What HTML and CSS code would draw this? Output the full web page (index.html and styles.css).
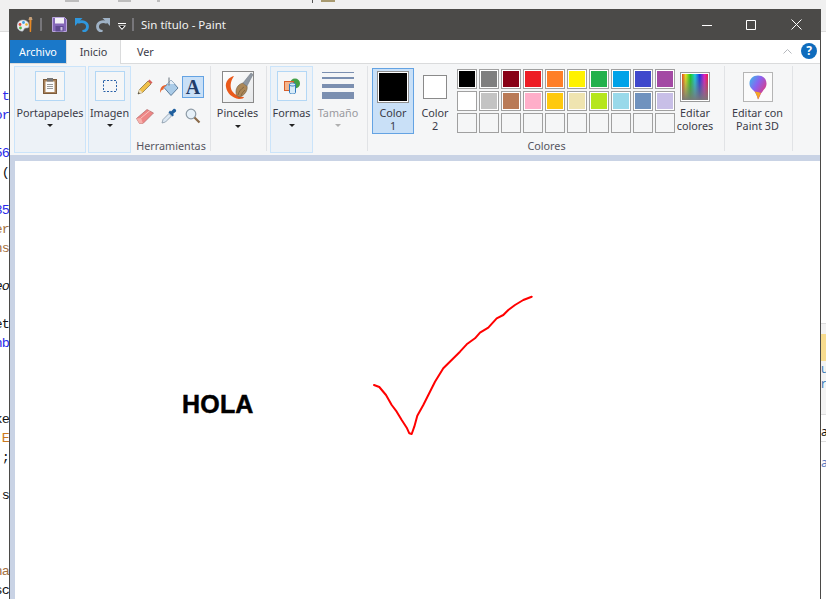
FILE: index.html
```html
<!DOCTYPE html>
<html lang="es">
<head>
    <meta charset="UTF-8">
    <title>Sin título - Paint</title>
    <link rel="stylesheet" href="styles.css">
</head>
<body>

    <!-- What shows around the window: browser bar and the editor behind it -->
    <div class="desktop">
        <div class="top-strip">
            <span class="tick tick1"></span>
            <span class="tick tick2"></span>
            <span class="tick tick3"></span>
            <span class="tick tick4"></span>
            <span class="tick tick5"></span>
        </div>
        <div class="behind">
            <div class="code-col">
                <div class="ln blue">t</div>
                <div class="ln blue">or</div>
                <div class="ln"></div>
                <div class="ln blue">56</div>
                <div class="ln">t (</div>
                <div class="ln"></div>
                <div class="ln blue">35</div>
                <div class="ln brown">er</div>
                <div class="ln brown">ns</div>
                <div class="ln"></div>
                <div class="ln ital">eo</div>
                <div class="ln"></div>
                <div class="ln">et</div>
                <div class="ln blue">nb</div>
                <div class="ln"></div>
                <div class="ln"></div>
                <div class="ln"></div>
                <div class="ln">ke</div>
                <div class="ln orange">E</div>
                <div class="ln"><span class="blue">'</span> ;</div>
                <div class="ln"></div>
                <div class="ln">.s</div>
                <div class="ln"></div>
                <div class="ln"></div>
                <div class="ln"></div>
                <div class="ln brown">na</div>
                <div class="ln">sc</div>
            </div>
            <div class="side-col">
                <div class="side-panel">
                    <div class="side-note"></div>
                    <div class="side-txt blue-soft">u</div>
                    <div class="side-txt blue-soft">r</div>
                </div>
                <div class="side-row">a</div>
                <div class="side-link">ac</div>
            </div>
        </div>
    </div>

    <!-- Paint window -->
    <div class="window">
        <div class="titlebar">
            <svg class="qa qa-app" viewBox="0 0 16 16" width="16" height="16">
                <path d="M0 9c0-4 3-6 6-6s6 2 6 5-1 3-3 3-2 2-3 3c-3 1-6-2-6-5z" fill="#e9edf2" stroke="#9aa3ad" stroke-width=".6"/>
                <circle cx="3" cy="7.500" r="1.400" fill="#e2483d"/>
                <circle cx="6.500" cy="5.500" r="1.400" fill="#3f9ee0"/>
                <circle cx="3.500" cy="11" r="1.400" fill="#54b848"/>
                <circle cx="9.500" cy="7.500" r="1.300" fill="#f0b429"/>
                <path d="M12.500 3h2l-.4 12-1.400 0z" fill="#e98a25"/>
                <path d="M11.500 3h4l-.8-3h-2.400z" fill="#c9a27a"/>
            </svg>
            <span class="qa-sep"></span>
            <svg class="qa qa-save" viewBox="0 0 15 15" width="15" height="15">
                <path d="M.5.500h12l2 2v12H.5z" fill="#8467b8" stroke="#b9a6dc"/>
                <rect x="3" y="1" width="9" height="5.500" fill="#f3f1f8"/>
                <rect x="3.500" y="9" width="8" height="5.500" fill="#5f4a91"/>
                <rect x="8.500" y="10" width="2" height="3.500" fill="#cbbfe3"/>
            </svg>
            <svg class="qa qa-undo" viewBox="0 0 14 14" width="14" height="14">
                <path d="M0 0h7.500L0 8z" fill="#2f97dd"/>
                <path d="M3 4.500C8 2.500 12.500 4.500 12.500 8.500 12.500 11 10.500 13 7.500 13.500" fill="none" stroke="#2f97dd" stroke-width="2.800"/>
            </svg>
            <svg class="qa qa-redo" viewBox="0 0 14 14" width="14" height="14">
                <path d="M14 0H6.500L14 8z" fill="#9fb2c6"/>
                <path d="M11 4.500C6 2.500 1.500 4.500 1.500 8.500 1.500 11 3.500 13 6.500 13.500" fill="none" stroke="#9fb2c6" stroke-width="2.800"/>
            </svg>
            <svg class="qa qa-more" viewBox="0 0 8 7" width="8" height="7">
                <rect x="0" y="0" width="8" height="1" fill="#fff"/>
                <path d="M0 2.500h8L4 7z" fill="#fff"/>
                <path d="M1.800 3h4.400L4 5.400z" fill="#111"/>
            </svg>
            <span class="qa-sep qa-sep2"></span>
            <span class="win-title">Sin título - Paint</span>
            <div class="win-btns">
                <svg class="wbtn wbtn-min" viewBox="0 0 10 10" width="10" height="10"><path d="M0 5.500h10" stroke="#fff" fill="none"/></svg>
                <svg class="wbtn wbtn-max" viewBox="0 0 10 10" width="10" height="10"><path d="M.5.500h9v9h-9z" stroke="#fff" fill="none"/></svg>
                <svg class="wbtn wbtn-close" viewBox="0 0 11 11" width="11" height="11"><path d="M.5.500l10 10M10.500.500l-10 10" stroke="#fff" fill="none"/></svg>
            </div>
        </div>

        <div class="tabs">
            <div class="tab tab-file">Archivo</div>
            <div class="tab tab-on">Inicio</div>
            <div class="tab tab-ver">Ver</div>
            <svg class="collapse" viewBox="0 0 9 5" width="9" height="5"><path d="M.5 4.500l4-4 4 4" fill="none" stroke="#b5b8bd"/></svg>
            <div class="help">?</div>
        </div>

        <div class="ribbon">
            <div class="group big hot g-clip">
                <div class="icon-box">
                    <svg viewBox="0 0 14 16" width="14" height="16">
                        <rect x=".5" y="1.500" width="13" height="14" fill="#a9825a" stroke="#7d5c3b"/>
                        <rect x="2.500" y="3.500" width="9" height="10.500" fill="#fbfbfb"/>
                        <rect x="4" y="0" width="6" height="3.500" fill="#777"/>
                        <path d="M4 6.500h6M4 8.500h6M4 10.500h6" stroke="#9a9a9a"/>
                    </svg>
                </div>
                <div class="lbl">Portapapeles</div>
                <div class="arrow"></div>
            </div>

            <div class="group big hot g-img">
                <div class="icon-box">
                    <svg viewBox="0 0 14 12" width="14" height="12"><rect x=".5" y=".5" width="13" height="11" fill="none" stroke="#2b62a8" stroke-dasharray="2 1.500"/></svg>
                </div>
                <div class="lbl">Imagen</div>
                <div class="arrow"></div>
            </div>

            <div class="group g-tools sep">
                <div class="tools">
                    <div class="tool">
                        <svg viewBox="0 0 16 16" width="16" height="16">
                            <path d="M1 15l1.500-4.500L11 2l3 3-8.500 8.500z" fill="#f0c04a" stroke="#7d6a3a" stroke-width=".7"/>
                            <path d="M11 2l1.500-1.500 3 3L14 5z" fill="#d9605a"/>
                            <path d="M1 15l1.500-4.500 3 3z" fill="#ecdcbc"/>
                            <path d="M1 15l.6-1.900 1.300 1.300z" fill="#333"/>
                        </svg>
                    </div>
                    <div class="tool">
                        <svg viewBox="0 0 20 20" width="20" height="20">
                            <path d="M12 3l7 8-7 7.500-7-8z" fill="#a9cbe8" stroke="#5f7f9d"/>
                            <path d="M12 3l3.500 4-7.500 0z" fill="#e4eef7"/>
                            <path d="M10 .5v8" stroke="#67727c" fill="none"/>
                            <path d="M8 8C3 8 1 10.500 1 16c1-2.500 2-3.500 3.500-3.500 0-2 1-3 3.500-4.500z" fill="#e8622c"/>
                        </svg>
                    </div>
                    <div class="tool tool-on"><span class="tool-a">A</span></div>
                    <div class="tool">
                        <svg viewBox="0 0 18 15" width="18" height="15">
                            <path d="M.5 9.500L11 .5l6.500 3.500L7 14.500H3.500z" fill="#ee8686" stroke="#b26a6a" stroke-width=".7"/>
                            <path d="M.5 9.500l3 5H7l-2-5.500z" fill="#f6b1ac"/>
                            <path d="M5 9L14 1.500" stroke="#f7c2be" fill="none"/>
                        </svg>
                    </div>
                    <div class="tool">
                        <svg viewBox="0 0 16 16" width="16" height="16">
                            <path d="M1 15l1-3.500 6-6 2.500 2.500-6 6z" fill="#dce8f3" stroke="#7a8c9e" stroke-width=".7"/>
                            <path d="M7.500 4.500l4 4 1.500-1.500-1-1L15 3.500c.8-1.500-1-3.300-2.500-2.500L10 3.500 9 2.500z" fill="#1f5f9e"/>
                        </svg>
                    </div>
                    <div class="tool">
                        <svg viewBox="0 0 16 16" width="16" height="16">
                            <circle cx="6" cy="6" r="4.800" fill="#e6f0f8" stroke="#8c9aa5" stroke-width="1.200"/>
                            <path d="M9.500 9.500l5 5" stroke="#8a6a4a" stroke-width="2.200"/>
                        </svg>
                    </div>
                </div>
                <div class="group-name">Herramientas</div>
            </div>

            <div class="group big g-brush sep">
                <div class="brush-box">
                    <svg viewBox="0 0 30 30" width="30" height="30">
                        <path d="M11 4C6 5 2 10 3 15c1 6 6 11 13 12 3 0 5-1 5-2-5 0-9-2-12-6-2-4-2-9 2-15z" fill="#ea5a1c"/>
                        <path d="M13 20c0-5 3-8 7-9l4 3c1 4-2 9-7 11-2 .5-4-2-4-5z" fill="#ab8758" stroke="#6f5a40" stroke-width=".6"/>
                        <path d="M15 23c1-4 3-6 6-8M18 24c1-3 2-4 4-6" stroke="#745a38" fill="none" stroke-width=".7"/>
                        <path d="M20 11L28 1l2 1.500-6 11.500z" fill="#8f98a3" stroke="#6a727c" stroke-width=".5"/>
                    </svg>
                </div>
                <div class="lbl">Pinceles</div>
                <div class="arrow"></div>
            </div>

            <div class="group big hot g-shapes">
                <div class="icon-box">
                    <svg viewBox="0 0 16 16" width="16" height="16">
                        <circle cx="11" cy="5.500" r="5" fill="#43a047"/>
                        <rect x=".5" y="3.500" width="9" height="9" fill="#f5b58d" stroke="#d9602a"/>
                        <path d="M5.500 6.500c0-2 6-2 6 0v8c0 2-6 2-6 0z" fill="#d8ebf8" stroke="#2f78bd"/>
                        <path d="M5.500 6.500c0 2 6 2 6 0" fill="none" stroke="#2f78bd"/>
                    </svg>
                </div>
                <div class="lbl">Formas</div>
                <div class="arrow"></div>
            </div>

            <div class="group big g-size sep">
                <div class="size-lines">
                    <div class="sz sz1"></div>
                    <div class="sz sz2"></div>
                    <div class="sz sz3"></div>
                    <div class="sz sz4"></div>
                </div>
                <div class="lbl lbl-off">Tamaño</div>
                <div class="arrow arrow-off"></div>
            </div>

            <div class="group g-colors sep">
                <div class="colors-row">
                    <div class="color-btn color-on">
                        <div class="swatch-big"><div class="swatch-in"></div></div>
                        <div class="lbl">Color<br>1</div>
                    </div>
                    <div class="color-btn">
                        <div class="swatch-two"></div>
                        <div class="lbl">Color<br>2</div>
                    </div>
                    <div class="palette">
                        <div class="cell c-black"></div>
                        <div class="cell c-gray"></div>
                        <div class="cell c-maroon"></div>
                        <div class="cell c-red"></div>
                        <div class="cell c-orange"></div>
                        <div class="cell c-yellow"></div>
                        <div class="cell c-green"></div>
                        <div class="cell c-sky"></div>
                        <div class="cell c-indigo"></div>
                        <div class="cell c-purple"></div>
                        <div class="cell c-white"></div>
                        <div class="cell c-silver"></div>
                        <div class="cell c-brown"></div>
                        <div class="cell c-pink"></div>
                        <div class="cell c-gold"></div>
                        <div class="cell c-cream"></div>
                        <div class="cell c-lime"></div>
                        <div class="cell c-aqua"></div>
                        <div class="cell c-steel"></div>
                        <div class="cell c-lilac"></div>
                        <div class="cell"></div>
                        <div class="cell"></div>
                        <div class="cell"></div>
                        <div class="cell"></div>
                        <div class="cell"></div>
                        <div class="cell"></div>
                        <div class="cell"></div>
                        <div class="cell"></div>
                        <div class="cell"></div>
                        <div class="cell"></div>
                    </div>
                    <div class="edit-colors">
                        <div class="rainbow"></div>
                        <div class="lbl">Editar<br>colores</div>
                    </div>
                </div>
                <div class="group-name">Colores</div>
            </div>

            <div class="group g-3d sep">
                <div class="box-3d">
                    <svg viewBox="0 0 18 25" width="18" height="25">
                        <defs>
                            <linearGradient id="drop" x1="0" y1="0" x2="1" y2=".8">
                                <stop offset="0" stop-color="#35c0e8"/>
                                <stop offset=".45" stop-color="#8a62f0"/>
                                <stop offset="1" stop-color="#f0306a"/>
                            </linearGradient>
                        </defs>
                        <path d="M9 .5c5 0 8.500 3.500 8.500 8 0 5-4 7-5.500 10-1 2-1.500 4-3 6-.8-3-1.500-5-3.500-8C3 14 .5 12 .5 8.500c0-4.500 3.500-8 8.500-8z" fill="url(#drop)"/>
                        <path d="M9 24.500c-.5-3-2-6-3.500-8 2 .5 4.500.5 6.500 1.500-1.500 2-1.500 4-3 6.500z" fill="#f5a623"/>
                    </svg>
                </div>
                <div class="lbl">Editar con<br>Paint 3D</div>
            </div>
        </div>

        <div class="work">
            <div class="canvas">
                <div class="hola">HOLA</div>
                <svg class="scribble" viewBox="0 0 170 155" width="170" height="155">
                    <path d="M4 95L9.300 97 16 105 21.700 115 26.700 121.700 31.700 130 36.700 137.700 39.300 143.300 41.700 144 44.300 136.700 47.300 125.700 53.300 115 65 91.700 73.300 78.300 90 61.700 96.700 54.300 105 48.300 110 42.700 118.300 37.700 126.700 28.300 133.300 25 138.300 20 145 15 153.300 10 161.700 6.700" fill="none" stroke="#f00" stroke-width="2" stroke-linejoin="round" stroke-linecap="round"/>
                </svg>
            </div>
        </div>
    </div>

</body>
</html>
```

FILE: styles.css
```css
* {
    box-sizing: border-box;
}
body {
    margin: 0;
    width: 826px;
    height: 599px;
    overflow: hidden;
    background-color: #fff;
    font-family: "Noto Sans", sans-serif;
    font-size: 10.8px;
    color: #3b3b47;
}

/* stuff behind the window */
.desktop {
    height: 599px;
    display: flex;
    flex-direction: column;
}
.top-strip {
    height: 32px;
    flex: none;
    display: flex;
    align-items: flex-start;
    background-color: #f0f0f0;
    border-bottom: 1px solid #dcdcdc;
}
.tick {
    height: 2px;
    background-color: #bdbdbd;
}
.tick1 {
    width: 14px;
    margin-left: 65px;
}
.tick2 {
    width: 13px;
    margin-left: 39px;
}
.tick3 {
    width: 3px;
    margin-left: 26px;
}
.tick4 {
    width: 1px;
    height: 3px;
    margin-left: 152px;
    background-color: #555;
}
.tick5 {
    width: 14px;
    margin-left: 8px;
    background-color: #a89a70;
}
.behind {
    flex: 1;
    display: flex;
    justify-content: space-between;
}
.code-col {
    width: 9px;
    padding-top: 55px;
    overflow: hidden;
    font-family: "Liberation Mono", monospace;
    font-size: 13.5px;
    letter-spacing: -.9px;
    color: #111;
}
.ln {
    height: 19px;
    line-height: 19px;
    display: flex;
    justify-content: flex-end;
    white-space: pre;
}
.blue {
    color: #2a2ae8;
}
.brown {
    color: #a3703f;
}
.orange {
    color: #c9781e;
}
.ital {
    font-style: italic;
}
.side-col {
    width: 5px;
    padding-top: 291px;
    overflow: hidden;
    font-size: 12px;
}
.side-panel {
    height: 92px;
    padding-top: 10px;
    background-color: #f3f3f3;
    border-top: 1px solid #ddd;
    border-bottom: 1px solid #ddd;
}
.side-note {
    height: 27px;
    background-color: #f8dc8e;
}
.side-txt {
    height: 14px;
    line-height: 14px;
    margin-top: 1px;
}
.blue-soft {
    color: #3a78b5;
}
.side-row {
    height: 27px;
    line-height: 33px;
    color: #111;
    border-bottom: 1px solid #ddd;
}
.side-link {
    margin-top: 12px;
    color: #5a78c0;
}

/* paint window */
.window {
    position: absolute;
    left: 9px;
    top: 9px;
    width: 812px;
    height: 590px;
    display: flex;
    flex-direction: column;
    background-color: #f5f6f7;
    border-left: 1px solid #4b4a48;
    border-right: 1px solid #4b4a48;
}
.titlebar {
    height: 31px;
    flex: none;
    display: flex;
    align-items: center;
    padding-left: 8px;
    margin: 0 -1px;
    background-color: #4b4a48;
}
.qa {
    flex: none;
}
.qa-sep {
    width: 2px;
    height: 13px;
    margin-left: 7px;
    background-color: #77767a;
}
.qa-save {
    margin-left: 10px;
}
.qa-undo {
    margin-left: 8px;
}
.qa-redo {
    margin-left: 7px;
}
.qa-more {
    margin-left: 8px;
    margin-top: 3px;
}
.qa-sep2 {
    margin-left: 6px;
}
.win-title {
    margin-left: 7px;
    font-size: 11.5px;
    color: #f2f2f2;
}
.win-btns {
    margin-left: auto;
    display: flex;
    align-items: center;
    padding-right: 19px;
}
.wbtn-max {
    margin-left: 34px;
}
.wbtn-close {
    margin-left: 35px;
}
.tabs {
    height: 24px;
    flex: none;
    display: flex;
    align-items: stretch;
    background-color: #fff;
    border-bottom: 1px solid #dadbdc;
}
.tab {
    line-height: 23px;
    text-align: center;
}
.tab-file {
    width: 56px;
    background-color: #1a78c9;
    color: #fff;
}
.tab-on {
    width: 55px;
    height: 24px;
    background-color: #f5f6f7;
    border-left: 1px solid #dadbdc;
    border-right: 1px solid #dadbdc;
}
.tab-ver {
    margin-left: 16px;
}
.collapse {
    margin-left: auto;
    align-self: center;
}
.help {
    width: 16px;
    height: 16px;
    margin: 3px 3px 0 9px;
    border-radius: 50%;
    background-color: #0f6cbd;
    color: #fff;
    font-weight: bold;
    font-size: 12px;
    line-height: 16px;
    text-align: center;
}

.ribbon {
    height: 91px;
    flex: none;
    display: flex;
    padding: 2px 0 2px 4px;
    background-color: #f5f6f7;
}
.group {
    height: 87px;
    flex: none;
    display: flex;
    flex-direction: column;
    align-items: center;
    position: relative;
}
.group.sep::after {
    content: "";
    position: absolute;
    right: 0;
    top: 0;
    width: 1px;
    height: 85px;
    background-color: #e1e3e6;
}
.hot {
    background-color: #edf2f7;
    border: 1px solid #cbe4fa;
}
.big {
    padding-top: 4px;
}
.g-clip {
    width: 72px;
    margin-right: 2px;
}
.g-img {
    width: 43px;
}
.g-tools {
    width: 80px;
}
.g-brush {
    width: 56px;
    padding: 5px 3px 0 0;
}
.g-shapes {
    width: 43px;
    margin-left: 3px;
}
.g-size {
    width: 55px;
    padding-right: 5px;
}
.g-colors {
    width: 357px;
}
.g-3d {
    width: 68px;
    padding: 6px 3px 0 0;
}
.icon-box {
    width: 30px;
    height: 30px;
    display: flex;
    align-items: center;
    justify-content: center;
    background-color: #f5f6f7;
    border: 1px solid #b3d7f5;
}
.lbl {
    margin-top: 5px;
    line-height: 13px;
    text-align: center;
    white-space: nowrap;
}
.lbl-off {
    color: #9a9aa0;
}
.arrow {
    width: 0;
    height: 0;
    margin-top: 5px;
    border-left: 3px solid transparent;
    border-right: 3px solid transparent;
    border-top: 3px solid #222;
}
.arrow-off {
    border-top-color: #b0b0b0;
}
.group-name {
    position: absolute;
    left: 0;
    right: 0;
    bottom: 1px;
    text-align: center;
    line-height: 13px;
    color: #55555f;
}

/* herramientas */
.tools {
    margin: 10px 0 0 3px;
    align-self: flex-start;
    display: grid;
    grid-template-columns: repeat(3, 22px);
    grid-auto-rows: 22px;
    column-gap: 2px;
    row-gap: 7px;
}
.tool {
    display: flex;
    align-items: center;
    justify-content: center;
}
.tool-on {
    background-color: #c9e0f7;
    border: 1px solid #64a3e3;
}
.tool-a {
    font-family: "Liberation Serif", serif;
    font-size: 20px;
    font-weight: bold;
    line-height: 20px;
    color: #1f3d6b;
}
.brush-box {
    width: 32px;
    height: 32px;
    display: flex;
    align-items: center;
    justify-content: center;
    background: linear-gradient(135deg, #fff, #e6e8ea);
    border: 1px solid #8a8a8a;
}
.g-brush .lbl {
    margin-top: 3px;
}
.g-brush .arrow {
    margin-top: 6px;
}
.size-lines {
    width: 32px;
    height: 30px;
    margin-top: 2px;
}
.sz {
    background-color: #7b8fb0;
}
.sz1 {
    height: 1px;
}
.sz2 {
    height: 2px;
    margin-top: 4px;
}
.sz3 {
    height: 4px;
    margin-top: 5px;
}
.sz4 {
    height: 7px;
    margin-top: 4px;
}
.g-size .lbl {
    margin-top: 4px;
}

/* colores */
.colors-row {
    display: flex;
    align-self: flex-start;
    padding: 2px 0 0 4px;
}
.color-btn {
    width: 42px;
    height: 66px;
    display: flex;
    flex-direction: column;
    align-items: center;
}
.color-on {
    background-color: #c9e0f7;
    border: 1px solid #64a3e3;
}
.swatch-big {
    width: 32px;
    height: 32px;
    margin-top: 2px;
    padding: 1px;
    background-color: #fff;
    border: 1px solid #8f8f8f;
}
.swatch-in {
    height: 100%;
    background-color: #000;
}
.swatch-two {
    width: 24px;
    height: 24px;
    margin-top: 7px;
    margin-bottom: 4px;
    background-color: #fff;
    border: 1px solid #8a8a8a;
}
.color-btn .lbl {
    margin-top: 3px;
}
.palette {
    margin-left: 1px;
    margin-top: 1px;
    display: grid;
    grid-template-columns: repeat(10, 20px);
    grid-auto-rows: 20px;
    gap: 2px;
    align-self: flex-start;
}
.cell {
    padding: 1px;
    border: 1px solid #a0a0a0;
    background-clip: content-box;
    box-shadow: inset 0 0 0 1px #fff;
}
.cell:nth-child(n+21) {
    box-shadow: none;
    background-color: #f5f6f7;
}
.c-black { background-color: #000; }
.c-gray { background-color: #7f7f7f; }
.c-maroon { background-color: #880015; }
.c-red { background-color: #ed1c24; }
.c-orange { background-color: #ff7f27; }
.c-yellow { background-color: #fff200; }
.c-green { background-color: #22b14c; }
.c-sky { background-color: #00a2e8; }
.c-indigo { background-color: #3f48cc; }
.c-purple { background-color: #a349a4; }
.c-white { background-color: #fff; }
.c-silver { background-color: #c3c3c3; }
.c-brown { background-color: #b97a57; }
.c-pink { background-color: #ffaec9; }
.c-gold { background-color: #ffc90e; }
.c-cream { background-color: #efe4b0; }
.c-lime { background-color: #b5e61d; }
.c-aqua { background-color: #99d9ea; }
.c-steel { background-color: #7092be; }
.c-lilac { background-color: #c8bfe7; }
.edit-colors {
    width: 40px;
    display: flex;
    flex-direction: column;
    align-items: center;
}
.edit-colors .lbl,
.g-3d .lbl {
    margin-top: 4px;
}
.rainbow {
    width: 30px;
    height: 30px;
    margin-top: 4px;
    border: 1px solid #9a9a9a;
    outline: 1px solid #fff;
    outline-offset: -2px;
    background: linear-gradient(to bottom, rgba(120, 120, 120, 0), rgba(120, 120, 120, 1)),
        linear-gradient(to right, #f01818, #f0e818, #18d018, #18d0e8, #1830e8, #e818c8, #f01818);
}
.box-3d {
    width: 30px;
    height: 30px;
    display: flex;
    align-items: center;
    justify-content: center;
    background-color: #fbfbfb;
    border: 1px solid #b5b5b5;
}

/* canvas */
.work {
    flex: 1;
    padding: 6px 0 0 5px;
    background-color: #c9d3e5;
}
.canvas {
    height: 100%;
    position: relative;
    background-color: #fff;
}
.hola {
    position: absolute;
    left: 167px;
    top: 229px;
    font-family: "Liberation Sans", sans-serif;
    font-size: 25px;
    font-weight: bold;
    line-height: 29px;
    color: #000;
    -webkit-text-stroke: .5px #000;
    letter-spacing: .2px;
}
.scribble {
    position: absolute;
    left: 355px;
    top: 129px;
}
```
